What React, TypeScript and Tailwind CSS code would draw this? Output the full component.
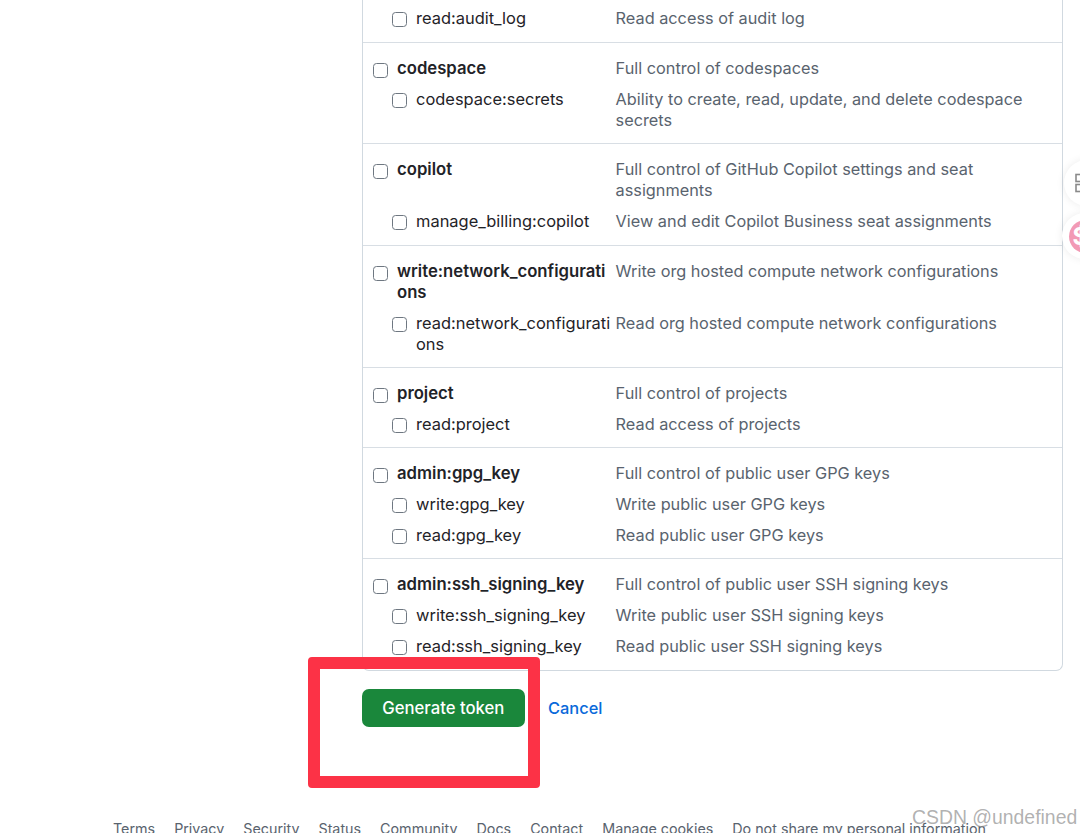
type Scope = { name: string; desc: string };
type Group = { parent: Scope; children: Scope[]; roomy?: boolean };

const groups: Group[] = [
  {
    parent: { name: "codespace", desc: "Full control of codespaces" },
    children: [{ name: "codespace:secrets", desc: "Ability to create, read, update, and delete codespace secrets" }],
  },
  {
    roomy: true,
    parent: { name: "copilot", desc: "Full control of GitHub Copilot settings and seat assignments" },
    children: [{ name: "manage_billing:copilot", desc: "View and edit Copilot Business seat assignments" }],
  },
  {
    parent: { name: "write:network_configurations", desc: "Write org hosted compute network configurations" },
    children: [{ name: "read:network_configurations", desc: "Read org hosted compute network configurations" }],
  },
  {
    parent: { name: "project", desc: "Full control of projects" },
    children: [{ name: "read:project", desc: "Read access of projects" }],
  },
  {
    parent: { name: "admin:gpg_key", desc: "Full control of public user GPG keys" },
    children: [
      { name: "write:gpg_key", desc: "Write public user GPG keys" },
      { name: "read:gpg_key", desc: "Read public user GPG keys" },
    ],
  },
  {
    roomy: true,
    parent: { name: "admin:ssh_signing_key", desc: "Full control of public user SSH signing keys" },
    children: [
      { name: "write:ssh_signing_key", desc: "Write public user SSH signing keys" },
      { name: "read:ssh_signing_key", desc: "Read public user SSH signing keys" },
    ],
  },
];

const footerLinks = ["Terms", "Privacy", "Security", "Status", "Community", "Docs", "Contact", "Manage cookies", "Do not share my personal information"];

function Box({ child }: { child?: boolean }) {
  return (
    <span
      className={
        child
          ? "mt-[4px] h-[15px] w-[15px] shrink-0 rounded-[3.5px] border border-[#6e7781] bg-white"
          : "mt-[5px] h-[15px] w-[15px] shrink-0 rounded-[3.5px] border border-[#6e7781] bg-white"
      }
    />
  );
}

function ScopeRow({ scope, child }: { scope: Scope; child?: boolean }) {
  return (
    <div className="grid grid-cols-[242.6px_1fr]">
      <div className={child ? "flex gap-[9px] pl-[19px] pr-[3px]" : "flex gap-[9px] pr-[6px]"}>
        <Box child={child} />
        <span className={child ? "min-w-0 break-words text-[16.45px]" : "min-w-0 break-words text-[16.7px] font-semibold text-[#1f2328]"}>{scope.name}</span>
      </div>
      <div className="text-[#59636e]">{scope.desc}</div>
    </div>
  );
}

export default function App() {
  return (
    <div className="relative h-[833px] w-[1080px] overflow-hidden bg-white font-['Inter',sans-serif] text-[16.3px] leading-[21px] text-[#1f2328]">
      <div className="ml-[362px] w-[701px] -mt-[1px] rounded-b-[7px] border-x border-b border-[#d1d9e0]">
        <div className="pb-[13px] pl-[10px] pt-[9px]">
          <ScopeRow child scope={{ name: "read:audit_log", desc: "Read access of audit log" }} />
        </div>
        {groups.map((g) => (
          <div
            key={g.parent.name}
            className={
              g.roomy
                ? "flex flex-col gap-[10px] border-t border-[#d8dee4] pb-[13px] pl-[10px] pr-[10px] pt-[15px]"
                : "flex flex-col gap-[10px] border-t border-[#d8dee4] pb-[12px] pl-[10px] pr-[10px] pt-[15px]"
            }
          >
            <ScopeRow scope={g.parent} />
            {g.children.map((c) => (
              <ScopeRow key={c.name} child scope={c} />
            ))}
          </div>
        ))}
      </div>

      <div className="ml-[362px] mt-[18px] flex items-center gap-[23.5px]">
        <button className="h-[38px] w-[162.5px] rounded-[7px] bg-[#1a873b] text-[16.7px] font-medium text-white">Generate token</button>
        <a className="text-[16.4px] font-medium text-[#0969da]">Cancel</a>
      </div>

      <div className="ml-[113px] mt-[90.5px] flex gap-[19px] text-[14.3px] text-[#59636e]">
        {footerLinks.map((l) => (
          <a key={l} className="whitespace-nowrap">{l}</a>
        ))}
      </div>

      {/* red highlight drawn on the screenshot */}
      <div className="absolute left-[308px] top-[657px] h-[131px] w-[232px] rounded-[4px] border-[12px] border-[#fc3246]" />

      {/* floating side widgets */}
      <div className="absolute left-[1064px] top-[160px] flex h-[46px] w-[46px] items-center justify-center rounded-full bg-white shadow-[0_0_8px_rgba(0,0,0,0.08)]">
        <svg width="46" height="46" viewBox="0 0 46 46" fill="none" stroke="#8a8a8a" strokeWidth="1.6">
          <rect x="12" y="14.5" width="7" height="7" />
          <rect x="12" y="24.5" width="7" height="7" />
          <rect x="22" y="14.5" width="7" height="7" />
        </svg>
      </div>
      <div className="absolute left-[1062px] top-[213px] flex h-[46px] w-[46px] items-center justify-center rounded-full bg-white shadow-[0_0_8px_rgba(0,0,0,0.08)]">
        <span className="flex h-[33px] w-[33px] items-center rounded-full bg-[#f29ab5] pl-[4px] text-[24px] font-bold text-white">$</span>
      </div>

      {/* watermark */}
      <div className="absolute left-[912px] top-[805px] whitespace-nowrap font-['Liberation_Sans',sans-serif] text-[19.4px] leading-[24px] text-[#8f8f8f]/70">CSDN @undefined</div>
    </div>
  );
}
